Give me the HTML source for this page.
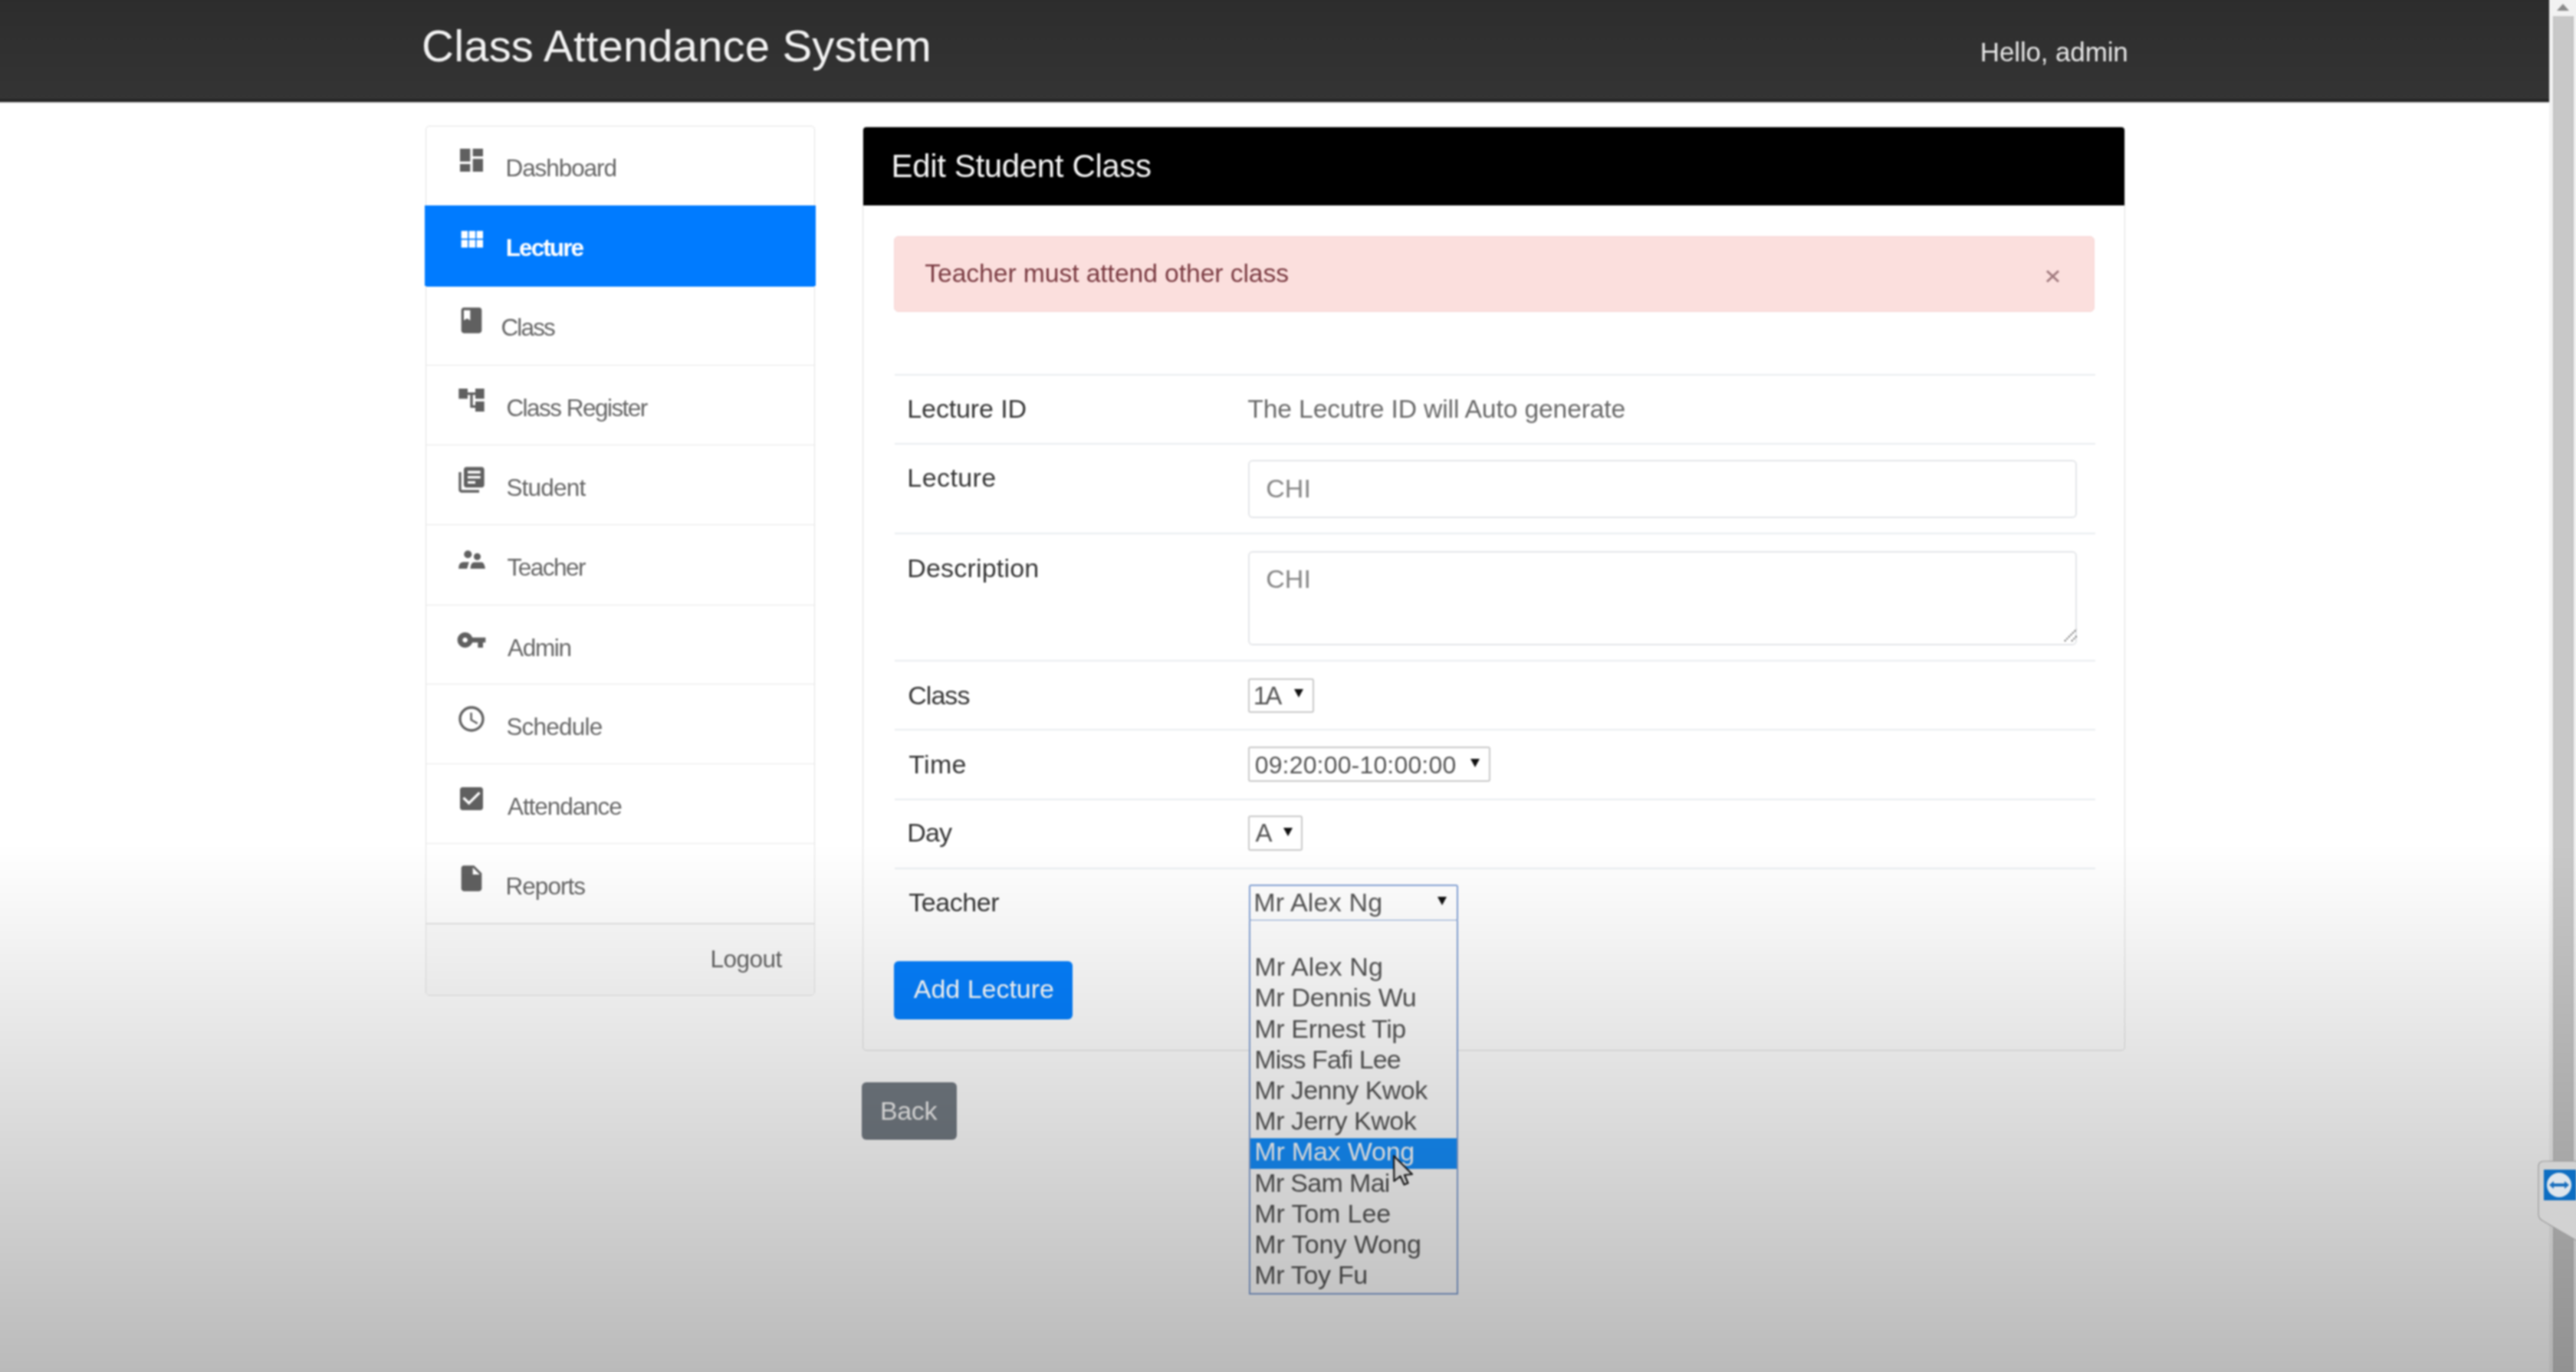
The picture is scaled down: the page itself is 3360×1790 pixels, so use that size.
<!DOCTYPE html>
<html><head><meta charset="utf-8">
<style>
html,body{margin:0;padding:0;}
body{width:3360px;height:1790px;position:relative;overflow:hidden;background:#fff;font-family:"Liberation Sans",sans-serif;}
#wrap{position:absolute;left:-20px;top:-20px;width:3400px;height:1830px;filter:blur(0.9px);}
#in{position:absolute;left:20px;top:20px;width:3360px;height:1790px;}
.a{position:absolute;}
.t{position:absolute;white-space:nowrap;line-height:1;}
.row{position:absolute;left:0;width:506px;border-bottom:1px solid #e8e8e8;}
.hr{position:absolute;left:1167px;width:1566px;height:2px;background:#e9ecef;}
.sel{position:absolute;border:2px solid #c9c9c9;border-radius:3px;background:#fff;box-sizing:border-box;}
.arr{position:absolute;width:0;height:0;border-left:6px solid transparent;border-right:6px solid transparent;border-top:11px solid #111;}
</style></head>
<body><div id="wrap"><div id="in">
<!-- navbar -->
<div class="a" style="left:-20px;top:-20px;width:3345px;height:149px;background:linear-gradient(#2b2b2b 0px,#2e2e2e 40px,#343434 149px);border-bottom:4px solid #262626;box-shadow:0 1px 1px rgba(0,0,0,.25);"></div>

<!-- sidebar -->
<div class="a" style="left:555px;top:164px;width:506px;height:1133px;border:1px solid #e2e2e2;border-radius:5px;background:#fff;overflow:hidden;">
  <div class="row" style="top:0;height:103px;"></div>
  <div class="row" style="top:104px;height:105px;background:#007bff;border:none;"></div>
  <div class="row" style="top:208px;height:103px;"></div>
  <div class="row" style="top:312px;height:103px;"></div>
  <div class="row" style="top:416px;height:103px;"></div>
  <div class="row" style="top:520px;height:104px;"></div>
  <div class="row" style="top:625px;height:102px;"></div>
  <div class="row" style="top:728px;height:103px;"></div>
  <div class="row" style="top:832px;height:103px;"></div>
  <div class="row" style="top:936px;height:103px;"></div>
  <div class="row" style="top:1040px;height:93px;background:#fcfcfc;border:none;border-top:1px solid #e2e2e2;"></div>
</div>
<div class="a" style="left:554px;top:268px;width:510px;height:105px;background:#007bff;"></div>
<svg class="a" style="left:595px;top:188.5px;" width="40" height="40" viewBox="0 0 24 24"><path fill="#606060" d="M3 13h8V3H3v10zm0 8h8v-6H3v6zm10 0h8V11h-8v10zm0-18v6h8V3h-8z"/></svg>
<svg class="a" style="left:595px;top:292.5px;" width="40" height="40" viewBox="0 0 24 24"><path fill="#fff" d="M4 11h5V5H4v6zm0 7h5v-6H4v6zm6 0h5v-6h-5v6zm6 0h5v-6h-5v6zm-6-7h5V5h-5v6zm6-6v6h5V5h-5z"/></svg>
<svg class="a" style="left:595px;top:397.5px;" width="40" height="40" viewBox="0 0 24 24"><path fill="#606060" d="M18 2H6c-1.1 0-2 .9-2 2v16c0 1.1.9 2 2 2h12c1.1 0 2-.9 2-2V4c0-1.1-.9-2-2-2zM6 4h5v8l-2.5-1.5L6 12V4z"/></svg>
<svg class="a" style="left:595px;top:501.5px;" width="40" height="40" viewBox="0 0 24 24"><path fill="#606060" d="M22 11V3h-7v3H9V3H2v8h7V8h2v10h4v3h7v-8h-7v3h-2V8h2v3z"/></svg>
<svg class="a" style="left:595px;top:605.5px;" width="40" height="40" viewBox="0 0 24 24"><path fill="#606060" d="M4 6H2v14c0 1.1.9 2 2 2h14v-2H4V6zm16-4H8c-1.1 0-2 .9-2 2v12c0 1.1.9 2 2 2h12c1.1 0 2-.9 2-2V4c0-1.1-.9-2-2-2zm-1 9H9V9h10v2zm-4 4H9v-2h6v2zm4-8H9V5h10v2z"/></svg>
<svg class="a" style="left:595px;top:709.5px;" width="40" height="40" viewBox="0 0 40 40"><g fill="#606060"><circle cx="15.3" cy="13.2" r="5"/><circle cx="27.5" cy="16.2" r="4.5"/><path d="M3.2 32C3.2 27 5 23.2 9.5 23.2H16.8L14.2 32Z"/><path d="M18.6 32C18.6 26.5 20.5 23.4 24 23.4H33.5C35.6 23.4 37.6 28 37.8 32Z"/></g></svg>
<svg class="a" style="left:595px;top:814.5px;" width="40" height="40" viewBox="0 0 24 24"><path fill="#606060" d="M12.65 10C11.83 7.67 9.61 6 7 6c-3.31 0-6 2.69-6 6s2.69 6 6 6c2.61 0 4.83-1.67 5.65-4H17v4h4v-4h2v-4H12.65zM7 14c-1.1 0-2-.9-2-2s.9-2 2-2 2 .9 2 2-.9 2-2 2z"/></svg>
<svg class="a" style="left:595px;top:917.5px;" width="40" height="40" viewBox="0 0 24 24"><path fill="#606060" d="M11.99 2C6.47 2 2 6.48 2 12s4.47 10 9.99 10C17.52 22 22 17.52 22 12S17.52 2 11.99 2zM12 20c-4.42 0-8-3.58-8-8s3.58-8 8-8 8 3.58 8 8-3.58 8-8 8zm.5-13H11v6l5.25 3.15.75-1.23-4.5-2.67z"/></svg>
<svg class="a" style="left:595px;top:1021.5px;" width="40" height="40" viewBox="0 0 24 24"><path fill="#606060" d="M19 3H5c-1.11 0-2 .9-2 2v14c0 1.1.89 2 2 2h14c1.11 0 2-.9 2-2V5c0-1.1-.89-2-2-2zm-9 14l-5-5 1.41-1.41L10 14.17l7.59-7.59L19 8l-9 9z"/></svg>
<svg class="a" style="left:595px;top:1125.5px;" width="40" height="40" viewBox="0 0 24 24"><path fill="#606060" d="M6 2c-1.1 0-1.99.9-1.99 2L4 20c0 1.1.89 2 1.99 2H18c1.1 0 2-.9 2-2V8l-6-6H6zm7 7V3.5L18.5 9H13z"/></svg>

<!-- panel -->
<div class="a" style="left:1125px;top:165px;width:1645px;height:1204px;border:1px solid #dedede;border-radius:5px;background:#fff;overflow:hidden;">
  <div class="a" style="left:0;top:0;width:1645px;height:102px;background:#000;"></div>
</div>
<div class="a" style="left:1166px;top:308px;width:1564px;height:97px;background:#fbdfdd;border:1px solid #f7d6d6;border-radius:6px;"></div>
<svg class="a" style="left:2668px;top:352px;" width="19" height="17" viewBox="0 0 19 17"><path d="M2 1.5L17 15.5M17 1.5L2 15.5" stroke="#a07a7e" stroke-width="3"/></svg>

<div class="hr" style="top:488px;"></div>
<div class="hr" style="top:578px;"></div>
<div class="hr" style="top:695px;"></div>
<div class="hr" style="top:861px;"></div>
<div class="hr" style="top:951px;"></div>
<div class="hr" style="top:1042px;"></div>
<div class="hr" style="top:1132px;"></div>

<div class="a" style="left:1628px;top:600px;width:1077px;height:72px;border:2px solid #e4e6e9;border-radius:6px;"></div>
<div class="a" style="left:1628px;top:719px;width:1077px;height:119px;border:2px solid #e4e6e9;border-radius:6px;"></div>
<svg class="a" style="left:2690px;top:818px;" width="22" height="22" viewBox="0 0 22 22"><path d="M3 18.5L18.5 3M12 18.5L18.5 12" stroke="#555" stroke-width="1.8" stroke-dasharray="2 1.6"/></svg>
<div class="sel" style="left:1628px;top:885px;width:86px;height:45px;"></div>
<div class="arr" style="left:1688px;top:899px;"></div>
<div class="sel" style="left:1628px;top:974px;width:316px;height:46px;"></div>
<div class="arr" style="left:1918px;top:990px;"></div>
<div class="sel" style="left:1628px;top:1064px;width:71px;height:46px;"></div>
<div class="arr" style="left:1674px;top:1080px;"></div>
<div class="sel" style="left:1629px;top:1154px;width:273px;height:48px;border-color:#85a3d6;"></div>
<div class="arr" style="left:1875px;top:1170px;"></div>

<div class="a" style="left:1166px;top:1254px;width:233px;height:76px;background:#0580ff;border-radius:6px;"></div>
<div class="a" style="left:1124px;top:1412px;width:124px;height:75px;background:#737b83;border-radius:6px;"></div>

<!-- dropdown -->
<div class="a" style="left:1629px;top:1201px;width:269px;height:486px;background:#fff;border:2px solid #85a3d6;border-top:none;"></div>
<div class="a" style="left:1631px;top:1485px;width:269px;height:40px;background:#1590ff;"></div>

<div class="t" style="left:550.1px;top:30.9px;font-size:58px;letter-spacing:0.17px;color:#f2f2f2;">Class Attendance System</div>
<div class="t" style="left:2582.8px;top:49.9px;font-size:35px;letter-spacing:-0.14px;color:#e6e6e6;">Hello, admin</div>
<div class="t" style="left:659.5px;top:204.3px;font-size:31.5px;letter-spacing:-1.08px;color:#666;">Dashboard</div>
<div class="t" style="left:659.8px;top:308.3px;font-size:31.5px;letter-spacing:-1.93px;color:#fff;font-weight:bold;">Lecture</div>
<div class="t" style="left:653.4px;top:412.3px;font-size:31.5px;letter-spacing:-1.83px;color:#666;">Class</div>
<div class="t" style="left:660.4px;top:517.3px;font-size:31.5px;letter-spacing:-1.53px;color:#666;">Class Register</div>
<div class="t" style="left:660.4px;top:621.3px;font-size:31.5px;letter-spacing:-0.80px;color:#666;">Student</div>
<div class="t" style="left:661.4px;top:725.3px;font-size:31.5px;letter-spacing:-1.48px;color:#666;">Teacher</div>
<div class="t" style="left:662.0px;top:830.3px;font-size:31.5px;letter-spacing:-1.31px;color:#666;">Admin</div>
<div class="t" style="left:660.4px;top:933.3px;font-size:31.5px;letter-spacing:-0.79px;color:#666;">Schedule</div>
<div class="t" style="left:662.0px;top:1037.3px;font-size:31.5px;letter-spacing:-1.07px;color:#666;">Attendance</div>
<div class="t" style="left:659.5px;top:1141.3px;font-size:31.5px;letter-spacing:-0.96px;color:#666;">Reports</div>
<div class="t" style="left:926.5px;top:1236.3px;font-size:31.5px;letter-spacing:-0.51px;color:#666;">Logout</div>
<div class="t" style="left:1162.6px;top:196.4px;font-size:42px;letter-spacing:-0.36px;color:#f5f5f5;">Edit Student Class</div>
<div class="t" style="left:1206.3px;top:339.5px;font-size:33.7px;letter-spacing:-0.09px;color:#7a3b42;">Teacher must attend other class</div>
<div class="t" style="left:1183.3px;top:516.2px;font-size:34px;letter-spacing:-0.12px;color:#363636;">Lecture ID</div>
<div class="t" style="left:1627.3px;top:516.5px;font-size:33.7px;letter-spacing:-0.16px;color:#6a6a6a;">The Lecutre ID will Auto generate</div>
<div class="t" style="left:1183.3px;top:605.7px;font-size:34px;letter-spacing:0.43px;color:#363636;">Lecture</div>
<div class="t" style="left:1651.3px;top:619.6px;font-size:34px;letter-spacing:0.00px;color:#858585;">CHI</div>
<div class="t" style="left:1183.3px;top:724.2px;font-size:34px;letter-spacing:0.18px;color:#363636;">Description</div>
<div class="t" style="left:1651.3px;top:738.2px;font-size:34px;letter-spacing:0.00px;color:#858585;">CHI</div>
<div class="t" style="left:1184.3px;top:889.7px;font-size:34px;letter-spacing:-0.98px;color:#363636;">Class</div>
<div class="t" style="left:1634.8px;top:890.8px;font-size:33px;letter-spacing:-3.02px;color:#555;">1A</div>
<div class="t" style="left:1185.3px;top:979.7px;font-size:34px;letter-spacing:0.31px;color:#363636;">Time</div>
<div class="t" style="left:1636.7px;top:981.5px;font-size:32px;letter-spacing:0.17px;color:#555;">09:20:00-10:00:00</div>
<div class="t" style="left:1183.3px;top:1069.2px;font-size:34px;letter-spacing:-0.88px;color:#363636;">Day</div>
<div class="t" style="left:1637.4px;top:1070.1px;font-size:33px;letter-spacing:0.00px;color:#555;">A</div>
<div class="t" style="left:1185.3px;top:1160.2px;font-size:34px;letter-spacing:-0.45px;color:#363636;">Teacher</div>
<div class="t" style="left:1635.3px;top:1160.2px;font-size:34px;letter-spacing:0.17px;color:#555;">Mr Alex Ng</div>
<div class="t" style="left:1191.8px;top:1273.0px;font-size:34px;letter-spacing:-0.02px;color:#fff;">Add Lecture</div>
<div class="t" style="left:1147.9px;top:1431.8px;font-size:34px;letter-spacing:-0.32px;color:#f0f0f0;">Back</div>
<div class="t" style="left:1636.3px;top:1244.2px;font-size:34px;letter-spacing:0.14px;color:#555;">Mr Alex Ng</div>
<div class="t" style="left:1636.3px;top:1284.4px;font-size:34px;letter-spacing:-0.30px;color:#555;">Mr Dennis Wu</div>
<div class="t" style="left:1636.3px;top:1324.6px;font-size:34px;letter-spacing:-0.35px;color:#555;">Mr Ernest Tip</div>
<div class="t" style="left:1636.3px;top:1364.8px;font-size:34px;letter-spacing:-0.91px;color:#555;">Miss Fafi Lee</div>
<div class="t" style="left:1636.3px;top:1405.0px;font-size:34px;letter-spacing:-0.54px;color:#555;">Mr Jenny Kwok</div>
<div class="t" style="left:1636.3px;top:1445.2px;font-size:34px;letter-spacing:-0.49px;color:#555;">Mr Jerry Kwok</div>
<div class="t" style="left:1636.3px;top:1485.4px;font-size:34px;letter-spacing:-0.20px;color:#fff;">Mr Max Wong</div>
<div class="t" style="left:1636.3px;top:1525.6px;font-size:34px;letter-spacing:-0.68px;color:#555;">Mr Sam Mai</div>
<div class="t" style="left:1636.3px;top:1565.8px;font-size:34px;letter-spacing:-0.12px;color:#555;">Mr Tom Lee</div>
<div class="t" style="left:1636.3px;top:1606.0px;font-size:34px;letter-spacing:-0.02px;color:#555;">Mr Tony Wong</div>
<div class="t" style="left:1636.3px;top:1646.2px;font-size:34px;letter-spacing:-0.32px;color:#555;">Mr Toy Fu</div>

<!-- cursor -->
<svg class="a" style="left:1816px;top:1506px;" width="30" height="42" viewBox="0 0 30 42"><path d="M2 2L2.4 35L10.5 28.5L15.5 39.5L20.5 37.5L16 27L26 26Z" fill="#f4f4f4" stroke="#1a1a1a" stroke-width="2.2" stroke-linejoin="round"/></svg>

<!-- scrollbar -->
<div class="a" style="left:3325px;top:-20px;width:55px;height:1830px;background:#f2f2f2;"></div>
<div class="a" style="left:3330px;top:21px;width:27px;height:1789px;background:#c8c8c8;box-shadow:inset 2px 0 0 #c2c2c2,inset -2px 0 0 #c2c2c2;"></div>
<svg class="a" style="left:3332px;top:3px;" width="22" height="14" viewBox="0 0 22 14"><path d="M11 2L19 11H3Z" fill="#8a8a8a"/></svg>

<!-- gradient overlay -->
<div class="a" style="left:-20px;top:1100px;width:3400px;height:710px;background:linear-gradient(to bottom,rgba(0,0,0,0) 0px,rgba(0,0,0,.27) 690px,rgba(0,0,0,.278) 710px);"></div>

<!-- teamviewer tab -->
<svg class="a" style="left:3308px;top:1512px;" width="72" height="110" viewBox="0 0 72 110"><path d="M72 3H10Q3 3 3 10V72Q3 78 9 81L52 106H72Z" fill="#d2d2d2" stroke="#9a9a9a" stroke-width="1.2"/>
<rect x="10" y="14" width="42" height="40" fill="#0e6ec2"/><circle cx="30" cy="34" r="16" fill="#dfe6ec"/><path d="M17 34L23 29V32H37V29L43 34L37 39V36H23V39Z" fill="#1a6fbd"/></svg>
</div></div></body></html>
